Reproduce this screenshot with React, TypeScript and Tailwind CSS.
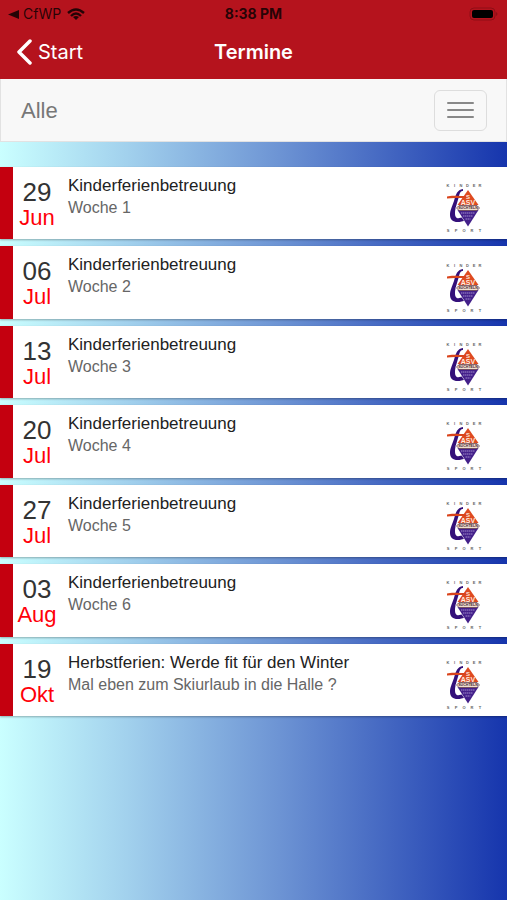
const events = [
  { day: "29", month: "Jun", title: "Kinderferienbetreuung", note: "Woche 1" },
  { day: "06", month: "Jul", title: "Kinderferienbetreuung", note: "Woche 2" },
  { day: "13", month: "Jul", title: "Kinderferienbetreuung", note: "Woche 3" },
  { day: "20", month: "Jul", title: "Kinderferienbetreuung", note: "Woche 4" },
  { day: "27", month: "Jul", title: "Kinderferienbetreuung", note: "Woche 5" },
  { day: "03", month: "Aug", title: "Kinderferienbetreuung", note: "Woche 6" },
  { day: "19", month: "Okt", title: "Herbstferien: Werde fit für den Winter", note: "Mal eben zum Skiurlaub in die Halle ?" },
];

function ClubLogo() {
  return (
    <svg viewBox="0 0 40 52" className="h-[52px] w-10 shrink-0" role="img" aria-label="ASV Süchteln Kindersport">
      <g fill="#666" fontFamily="Liberation Sans, sans-serif" fontSize="4" fontWeight="700" textAnchor="middle">
        <text x="5" y="4.500">K</text><text x="11.500" y="4.500">I</text><text x="18" y="4.500">N</text>
        <text x="24.500" y="4.500">D</text><text x="31" y="4.500">E</text><text x="37" y="4.500">R</text>
        <text x="5" y="49.500">S</text><text x="13" y="49.500">P</text><text x="21" y="49.500">O</text><text x="29" y="49.500">R</text><text x="37" y="49.500">T</text>
      </g>
      {/* Sweeping "t" behind the diamond */}
      <path d="M20 7C14 8 13 12 11 19C9 25 7 28 7 33C7 40 14 42 23 38L20 35C15 37 12 37 12 31C12 26 15 19 16 14C17 10 18 9 20 9Z" fill="#34107a" />
      <path d="M25 7L37.500 26L25 45L12.500 26Z" fill="#fff" />
      <path d="M25 8L35.500 23H14.500Z" fill="#de4a20" />
      <path d="M14.500 28H35.500L25 44.500Z" fill="#43208a" />
      <path d="M4 14.500C8 13 16 14 26 14V16.500C17 16 10 15.500 4 16.500Z" fill="#d9441c" />
      <path d="M13.500 26L16 23.500H34L36.500 26L34 28.500H16Z" fill="#f0e0d0" stroke="#6b4450" strokeWidth="0.800" />
      <text x="25" y="16.500" fill="#ffe9df" fontFamily="Liberation Sans, sans-serif" fontSize="6" fontWeight="700" textAnchor="middle">S</text>
      <text x="25" y="22.500" fill="#ffe9df" fontFamily="Liberation Sans, sans-serif" fontSize="7" fontWeight="700" textAnchor="middle">ASV</text>
      <text x="25" y="27.300" fill="#4b2630" fontFamily="Liberation Sans, sans-serif" fontSize="3.600" fontWeight="700" textAnchor="middle">SÜCHTELN</text>
      <path d="M18 31H32M20 34H30M22.500 37H27.500" stroke="#a18bcb" strokeWidth="1" strokeDasharray="1.500 0.500" />
    </svg>
  );
}

export default function App() {
  return (
    <div className="min-h-screen bg-[linear-gradient(90deg,#caffff_0%,#a2d1ed_25%,#6d94d4_55%,#1635ad_100%)] font-['Liberation_Sans',Arial,sans-serif]">
      <header className="bg-[#b5131d] pb-1 font-[Inter,sans-serif]">
        <div className="grid h-7 grid-cols-3 items-center px-2 text-sm text-black/80">
          <div className="flex items-center gap-1">
            <svg viewBox="0 0 10 10" className="size-[11px]" fill="currentColor" aria-hidden="true"><path d="M0 5L10 1V9Z" /></svg>
            <span>CfWP</span>
            <svg viewBox="0 0 18 13" className="ml-0.5 h-[13px] w-[18px]" fill="none" stroke="currentColor" strokeWidth="2.400" aria-hidden="true">
              <path d="M1 5Q9-2 17 5M4 8Q9 3 14 8" />
              <path d="M9 12L6 9Q9 7 12 9Z" fill="currentColor" stroke="none" />
            </svg>
          </div>
          <span className="text-center font-bold">8:38 PM</span>
          <svg viewBox="0 0 30 14" className="h-3.5 w-[30px] justify-self-end" aria-hidden="true">
            <rect x="1" y="1" width="25" height="12" rx="4" fill="none" stroke="#8f0e16" strokeWidth="1" />
            <rect x="3" y="3" width="21" height="8" rx="2" fill="#000" />
            <path d="M27 5Q30 7 27 9Z" fill="#8f0e16" />
          </svg>
        </div>
        <div className="grid h-[47px] grid-cols-3 items-center px-4 text-xl text-white">
          <button type="button" className="flex items-center gap-1.5">
            <svg viewBox="0 0 16 26" className="h-[26px] w-4" fill="none" stroke="currentColor" strokeWidth="3.500" strokeLinecap="round" strokeLinejoin="round" aria-hidden="true"><path d="M14 2L3 13L14 24" /></svg>
            Start
          </button>
          <h1 className="text-center font-semibold">Termine</h1>
        </div>
      </header>
      <nav className="flex h-[63px] items-center justify-between border-x border-b border-[#e2e2e2] bg-[#f8f8f8] pr-[19px] pl-5">
        <span className="text-[22px] text-[#777]">Alle</span>
        <button type="button" aria-label="Menü" className="flex h-[41px] w-[53px] flex-col items-center justify-center gap-[5px] rounded-md border border-[#ddd]">
          <span className="h-0.5 w-[27px] rounded-sm bg-[#888]" />
          <span className="h-0.5 w-[27px] rounded-sm bg-[#888]" />
          <span className="h-0.5 w-[27px] rounded-sm bg-[#888]" />
        </button>
      </nav>
      <ul className="mt-[25px] grid min-h-[549px] auto-rows-fr gap-[7px]">
        {events.map((event) => (
          <li key={event.day} className="flex border-l-[13px] border-[#c4000f] bg-white pr-6 shadow-[0_1px_2px_rgba(0,0,0,0.3)]">
            <div className="w-12 pt-[11px] text-center">
              <div className="text-[26px] leading-[28px] text-[#333]">{event.day}</div>
              <div className="text-[22px] leading-[24px] text-[#ff0008]">{event.month}</div>
            </div>
            <div className="min-w-0 flex-1 pt-2 pl-[7px]">
              <h2 className="text-[17px] leading-[22px] text-[#222]">{event.title}</h2>
              <p className="text-base leading-[21px] text-[#666]">{event.note}</p>
            </div>
            <div className="flex items-center pt-2.5"><ClubLogo /></div>
          </li>
        ))}
      </ul>
    </div>
  );
}
